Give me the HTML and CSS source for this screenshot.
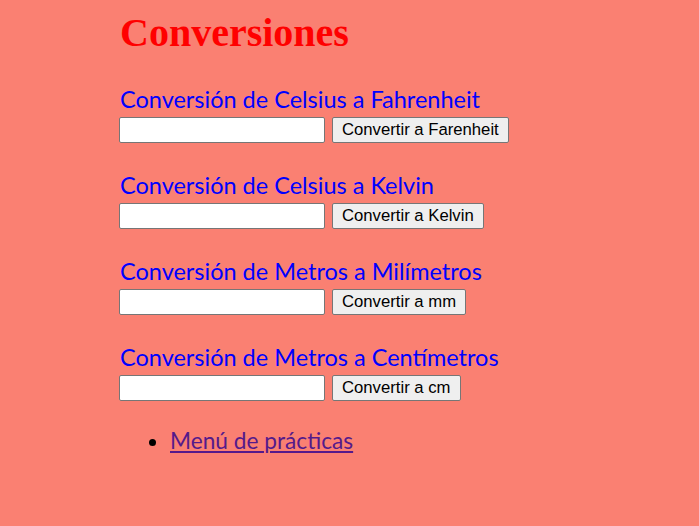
FILE: index.html
```html
<!DOCTYPE html>
<html lang="es">
<head>
<meta charset="utf-8">
<title>Conversiones</title>
<link rel="stylesheet" href="styles.css">
</head>
<body>
<div class="page">
  <h1 class="title">Conversiones</h1>

  <section class="conv">
    <h2 class="conv-title">Conversión de Celsius a Fahrenheit</h2>
    <div class="row">
      <input class="field" type="text">
      <button class="btn" type="button">Convertir a Farenheit</button>
    </div>
  </section>

  <section class="conv">
    <h2 class="conv-title">Conversión de Celsius a Kelvin</h2>
    <div class="row">
      <input class="field" type="text">
      <button class="btn" type="button">Convertir a Kelvin</button>
    </div>
  </section>

  <section class="conv">
    <h2 class="conv-title">Conversión de Metros a Milímetros</h2>
    <div class="row">
      <input class="field" type="text">
      <button class="btn" type="button">Convertir a mm</button>
    </div>
  </section>

  <section class="conv">
    <h2 class="conv-title">Conversión de Metros a Centímetros</h2>
    <div class="row">
      <input class="field" type="text">
      <button class="btn" type="button">Convertir a cm</button>
    </div>
  </section>

  <ul class="menu">
    <li class="menu-item"><a class="menu-link" href="#">Menú de prácticas</a></li>
  </ul>
</div>
</body>
</html>
```

FILE: styles.css
```css
html, body {
  margin: 0;
  padding: 0;
}
body {
  background: #fa8072;
}
.page {
  padding: 9px 0 0 120px;
}
.title {
  margin: 0 0 28px 0;
  font-family: "Liberation Serif", serif;
  font-weight: bold;
  font-size: 40px;
  line-height: 48px;
  color: #ff0000;
}
.conv {
  margin: 0 0 28px 0;
}
.conv-title {
  margin: 0 0 4px 0;
  font-family: Lato, sans-serif;
  font-weight: normal;
  font-size: 23.5px;
  line-height: 28px;
  color: #0000ff;
}
.row {
  display: flex;
  gap: 7px;
  height: 26px;
}
.field {
  box-sizing: border-box;
  width: 206px;
  height: 26px;
  margin: 0 0 0 -1px;
  padding: 1px 2px;
  border: 1px solid #767676;
  border-radius: 2px;
  background: #ffffff;
  font-family: "Liberation Sans", Arial, sans-serif;
  font-size: 13.33px;
}
.btn {
  box-sizing: border-box;
  height: 26px;
  margin: 0;
  padding: 1px 9px;
  border: 1px solid #767676;
  border-radius: 2px;
  background: #efefef;
  color: #000000;
  font-family: "Liberation Sans", Arial, sans-serif;
  font-size: 16.7px;
}
.menu {
  margin: -2px 0 0 0;
  padding: 0 0 0 50px;
}
.menu-item {
  font-family: Lato, sans-serif;
  font-size: 22.7px;
  line-height: 28px;
}
.menu-link {
  color: #551a8b;
}
```
